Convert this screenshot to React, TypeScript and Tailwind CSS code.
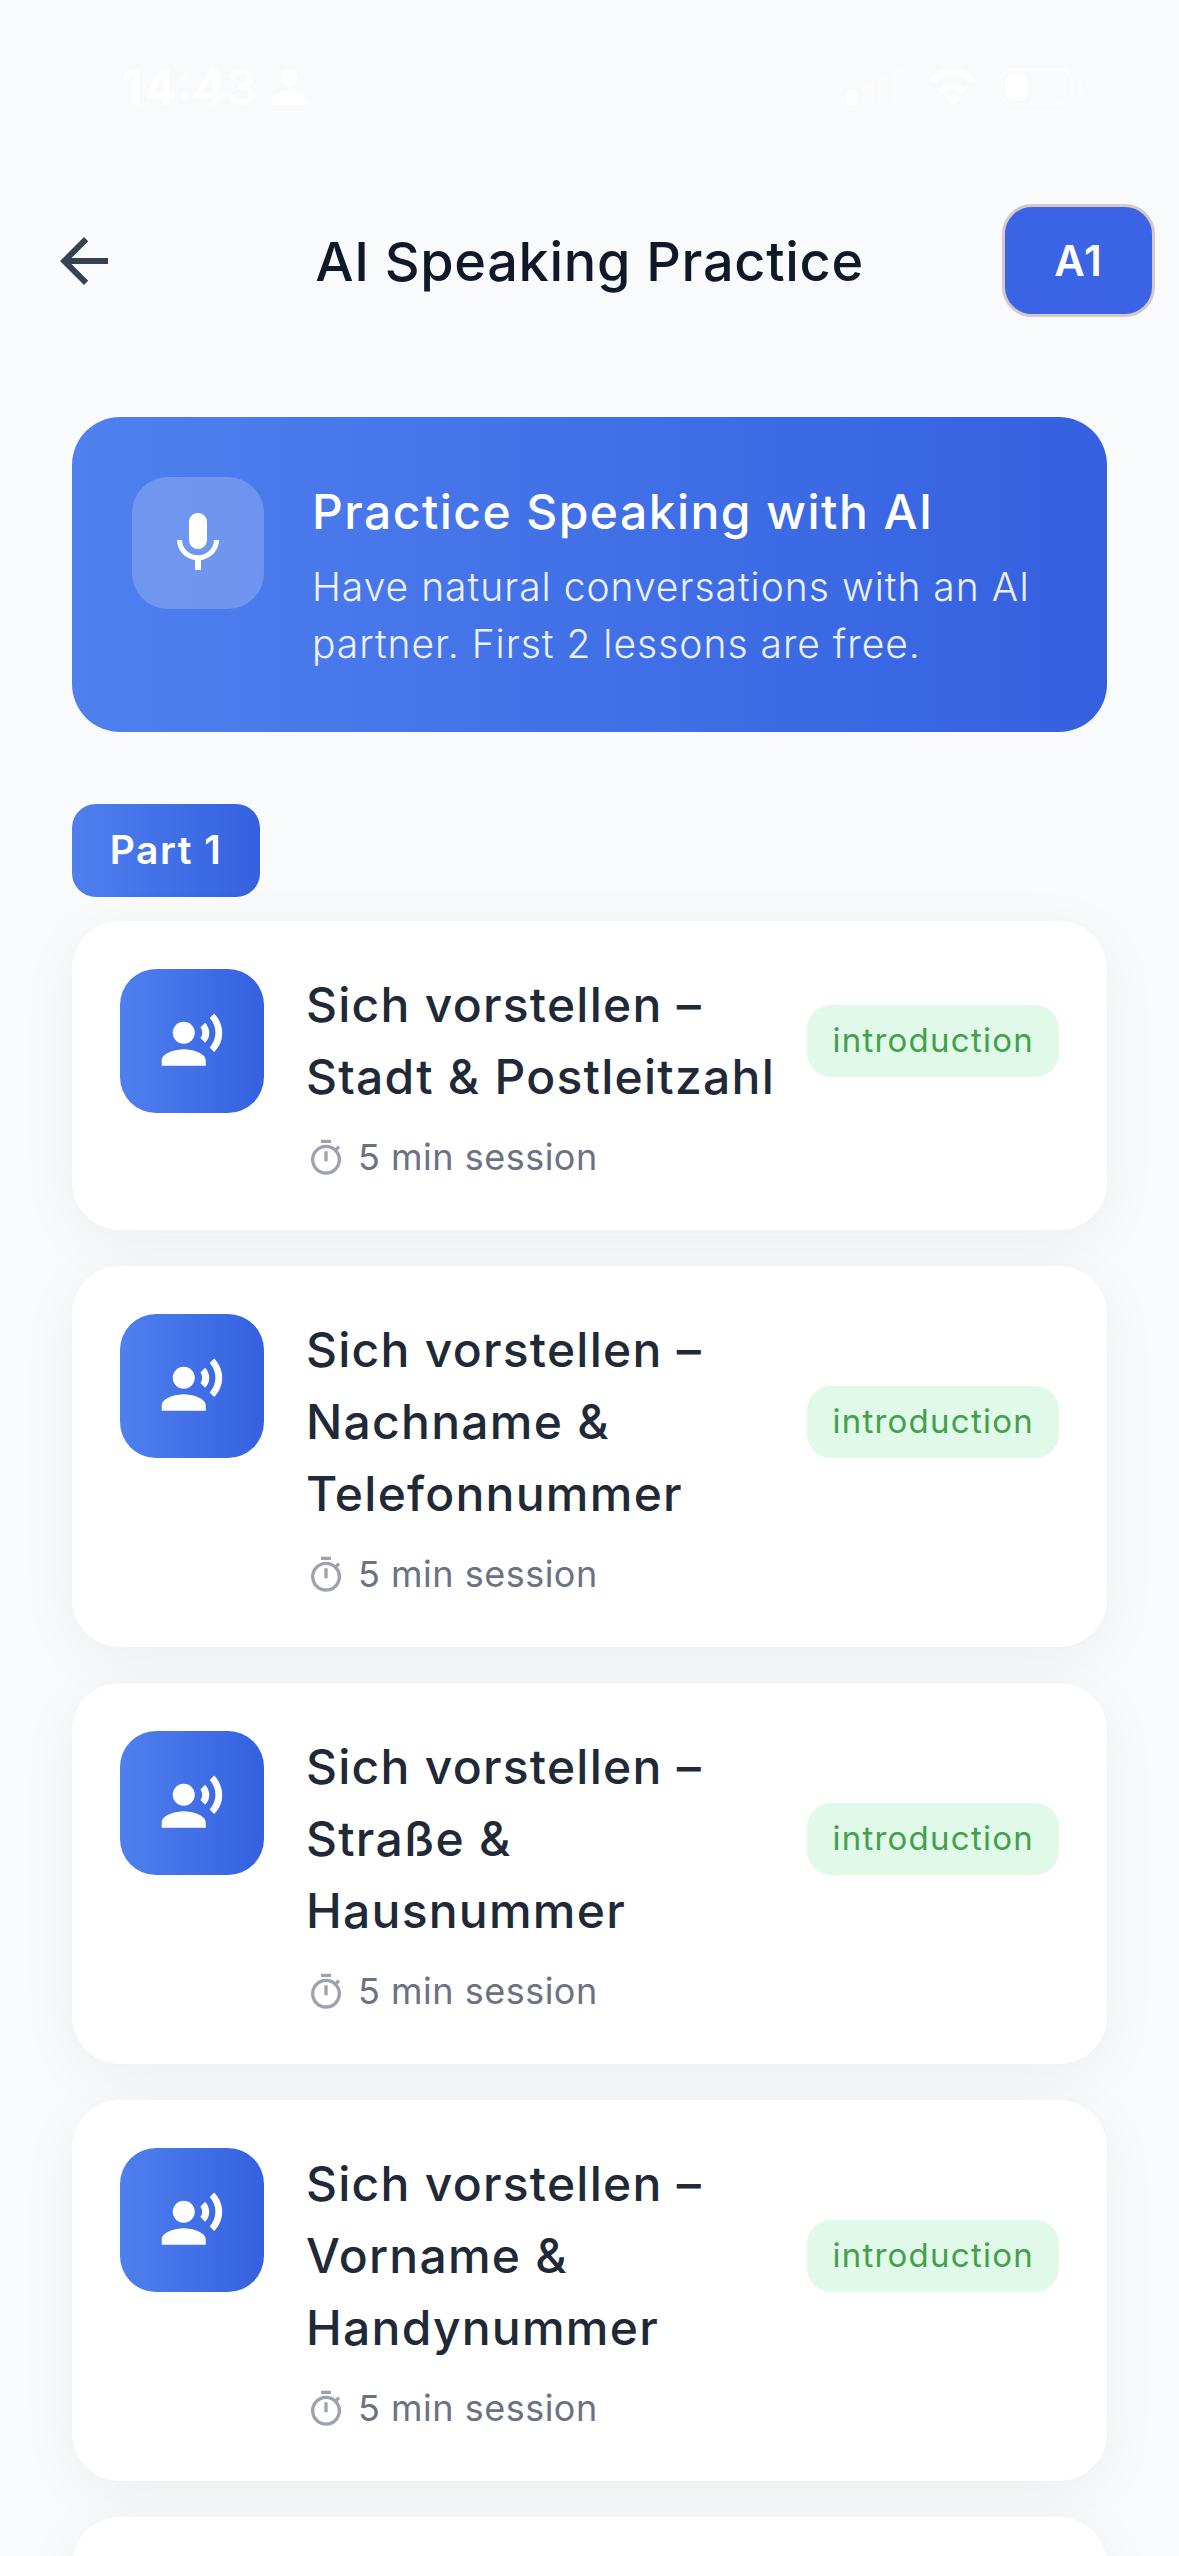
import { MdArrowBack, MdMic, MdOutlineTimer, MdRecordVoiceOver } from 'react-icons/md';

const lessons = [
  { id: 1, lines: ['Sich vorstellen –', 'Stadt & Postleitzahl'] },
  { id: 2, lines: ['Sich vorstellen –', 'Nachname &', 'Telefonnummer'] },
  { id: 3, lines: ['Sich vorstellen –', 'Straße &', 'Hausnummer'] },
  { id: 4, lines: ['Sich vorstellen –', 'Vorname &', 'Handynummer'] },
];

function LessonCard({ lines }: { lines: string[] }) {
  return (
    <div className="flex gap-[42px] rounded-[48px] bg-white p-[48px] shadow-[0_12px_60px_rgba(0,0,0,0.05)]">
      <div className="flex h-[144px] w-[144px] shrink-0 items-center justify-center rounded-[36px] bg-linear-to-r from-[#4f80ee] to-[#3560e0]">
        <MdRecordVoiceOver size={66} color="#ffffff" />
      </div>
      <div className="flex min-w-0 flex-1 flex-col gap-[20px]">
        <div className="flex items-center justify-between gap-[24px]">
          <div className="text-[48px] leading-[72px] font-medium tracking-[1.25px] text-[#1f2937]">
            {lines.map((line) => (
              <div key={line} className="whitespace-nowrap">{line}</div>
            ))}
          </div>
          <span className="flex h-[72px] shrink-0 items-center rounded-[24px] bg-[#e1f9e8] px-[25px] text-[33px] tracking-[1.25px] text-[#43a04d]">
            introduction
          </span>
        </div>
        <div className="flex items-center gap-[12px] text-[36px] leading-[49px] tracking-[0.5px] text-[#6b7280]">
          <MdOutlineTimer size={40} color="#9ca3af" />
          <span>5 min session</span>
        </div>
      </div>
    </div>
  );
}

export default function App() {
  return (
    <div className="h-[2556px] overflow-hidden bg-[#f9fafb] font-[Inter,sans-serif]">
      {/* Status bar, white on a pale page */}
      <div className="h-[204px] pt-[60px] pr-[97px] pl-[122px] text-white">
        <div className="flex h-[54px] items-center justify-between">
          <div className="flex items-center gap-[14px]">
            <span className="text-[50px] leading-[54px] font-semibold">14:43</span>
            <svg width="34" height="36" viewBox="0 0 34 36" fill="#ffffff">
              <ellipse cx="17" cy="9" rx="8.5" ry="9" />
              <path d="M0 34c0-8 8-13 17-13s17 5 17 13q0 2-2 2H2q-2 0-2-2z" />
            </svg>
          </div>
          <div className="flex items-center gap-[23px]">
            <svg width="58" height="38" viewBox="0 0 58 38" fill="#ffffff">
              <rect x="0" y="22" width="10" height="16" rx="3" />
              <rect x="16" y="15" width="10" height="23" rx="3" opacity="0.3" />
              <rect x="31" y="8" width="10" height="30" rx="3" opacity="0.3" />
              <rect x="47" y="0" width="10" height="38" rx="3" opacity="0.2" />
            </svg>
            <svg width="49" height="38" viewBox="0 0 49 38" fill="none">
              <path d="M4 13Q24.5 -5 45 13" stroke="#ffffff" strokeWidth="7" />
              <path d="M13 24Q24.5 13 36 24" stroke="#ffffff" strokeWidth="7" />
              <path d="M17 30Q24.5 24 32 30L24.5 38Z" fill="#ffffff" />
            </svg>
            <svg width="82" height="38" viewBox="0 0 82 38" fill="none">
              <rect x="1.5" y="1.5" width="70" height="35" rx="11" stroke="#ffffff" strokeWidth="3" opacity="0.45" />
              <rect x="5" y="6" width="23" height="27" rx="9" fill="#ffffff" />
              <rect x="77" y="13" width="5" height="12" rx="2" fill="#ffffff" opacity="0.4" />
            </svg>
          </div>
        </div>
      </div>

      {/* Header */}
      <div className="grid h-[113px] grid-cols-[1fr_auto_1fr] items-center px-[24px]">
        <div className="pl-[24px]">
          <MdArrowBack size={72} color="#374151" />
        </div>
        <h1 className="pt-[2px] text-[54px] font-medium tracking-[0.7px] text-[#111827]">AI Speaking Practice</h1>
        <div className="flex justify-end">
          <div className="flex h-[113px] w-[153px] items-center justify-center rounded-[30px] border-[3px] border-[#d7c8c8] bg-[#3b63e6] text-[42px] font-semibold tracking-[1px] text-white">
            A1
          </div>
        </div>
      </div>

      <div className="px-[72px] pt-[100px]">
        {/* Intro banner */}
        <div className="flex h-[315px] gap-[48px] rounded-[48px] bg-linear-to-r from-[#4f80ee] to-[#3560e0] p-[60px]">
          <div className="flex h-[132px] w-[132px] shrink-0 items-center justify-center rounded-[36px] bg-white/20">
            <MdMic size={72} color="#ffffff" />
          </div>
          <div className="min-w-0 flex-1">
            <h2 className="text-[48px] leading-[69px] font-medium tracking-[1.45px] text-white">Practice Speaking with AI</h2>
            <p className="mt-[12px] text-[39px] leading-[57px] font-light tracking-[1px] text-white/90">
              Have natural conversations with an AI partner. First 2 lessons are free.
            </p>
          </div>
        </div>

        {/* Part 1 */}
        <div className="mt-[72px] mb-[24px] flex h-[93px] w-[188px] items-center justify-center rounded-[24px] bg-linear-to-r from-[#4f80ee] to-[#3560e0] text-[39px] font-semibold tracking-[1.5px] text-white">
          Part 1
        </div>
        <div className="flex flex-col gap-[36px]">
          {lessons.map((lesson) => (
            <LessonCard key={lesson.id} lines={lesson.lines} />
          ))}
          <div className="h-[300px] rounded-[48px] bg-white shadow-[0_12px_60px_rgba(0,0,0,0.05)]" />
        </div>
      </div>
    </div>
  );
}
